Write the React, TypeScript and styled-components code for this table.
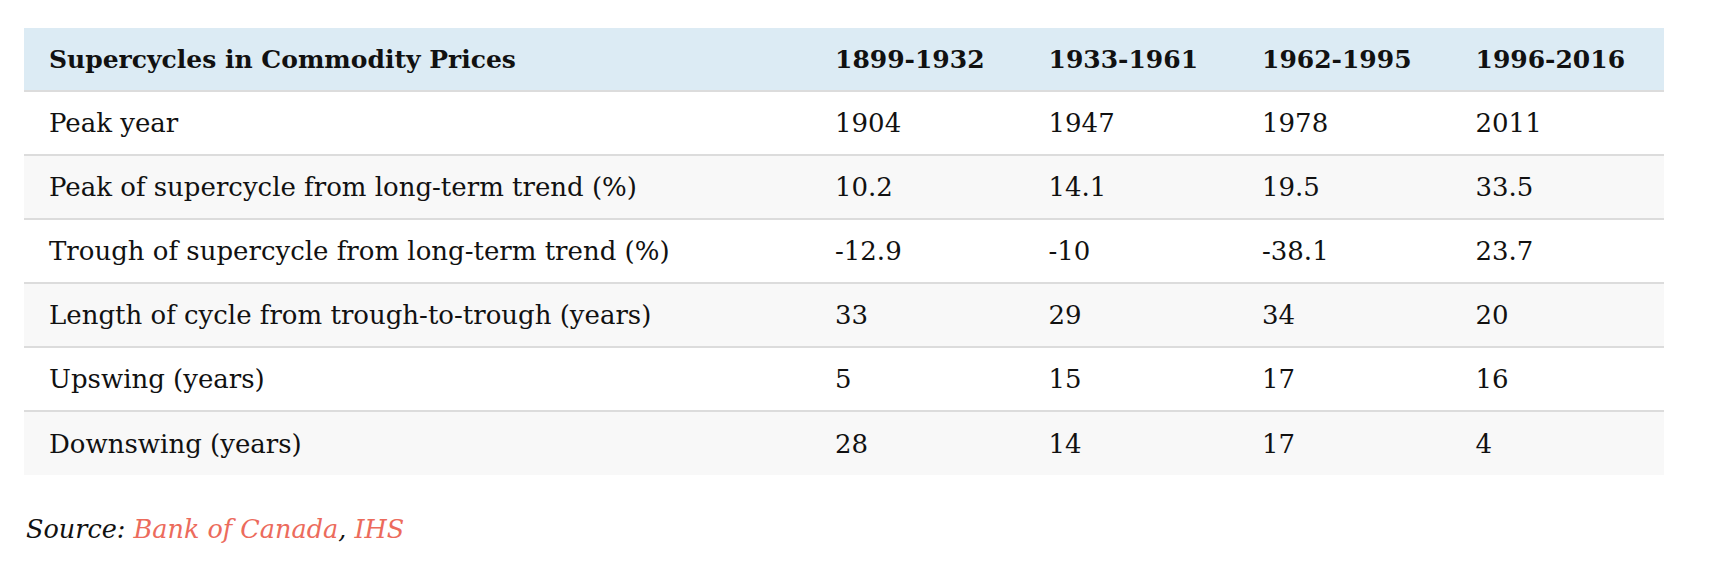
import React from "react";
import { styled, createGlobalStyle } from "styled-components";

const GlobalStyle = createGlobalStyle`
  html, body {
    margin: 0;
    padding: 0;
    background: #ffffff;
  }
  body {
    font-family: "DejaVu Serif", "Liberation Serif", serif;
    color: #111111;
  }
`;

type CycleRow = {
  label: string;
  values: string[];
};

const periods = ["1899-1932", "1933-1961", "1962-1995", "1996-2016"];

const rows: CycleRow[] = [
  { label: "Peak year", values: ["1904", "1947", "1978", "2011"] },
  {
    label: "Peak of supercycle from long-term trend (%)",
    values: ["10.2", "14.1", "19.5", "33.5"],
  },
  {
    label: "Trough of supercycle from long-term trend (%)",
    values: ["-12.9", "-10", "-38.1", "23.7"],
  },
  {
    label: "Length of cycle from trough-to-trough (years)",
    values: ["33", "29", "34", "20"],
  },
  { label: "Upswing (years)", values: ["5", "15", "17", "16"] },
  { label: "Downswing (years)", values: ["28", "14", "17", "4"] },
];

const App = () => {
  return (
    <Page>
      <GlobalStyle />
      <DataTable>
        <colgroup>
          <LabelCol />
          {periods.map((p) => (
            <col key={p} />
          ))}
        </colgroup>
        <thead>
          <HeadRow>
            <HeadCell>Supercycles in Commodity Prices</HeadCell>
            {periods.map((p) => (
              <HeadCell key={p}>{p}</HeadCell>
            ))}
          </HeadRow>
        </thead>
        <tbody>
          {rows.map((row, i) => (
            <Row key={row.label} $shaded={i % 2 === 1}>
              <Cell>{row.label}</Cell>
              {row.values.map((v, j) => (
                <Cell key={j}>{v}</Cell>
              ))}
            </Row>
          ))}
        </tbody>
      </DataTable>
      <Source>
        Source: <SourceLink href="#">Bank of Canada</SourceLink>,{" "}
        <SourceLink href="#">IHS</SourceLink>
      </Source>
    </Page>
  );
};

export default App;

const Page = styled.div`
  padding: 28px 50px 20px 24px;
  width: 1640px;
`;

const DataTable = styled.table`
  width: 1640px;
  border-collapse: collapse;
  table-layout: fixed;
  font-size: 26px;
`;

const LabelCol = styled.col`
  width: 786px;
`;

const HeadRow = styled.tr`
  background: #dcebf4;
  border-bottom: 2px solid #dcdcdc;
`;

const HeadCell = styled.th`
  height: 63px;
  padding: 0 25px;
  text-align: left;
  font-weight: 700;
  font-size: 25px;
  vertical-align: middle;
  box-sizing: border-box;
  white-space: nowrap;
`;

const Row = styled.tr<{ $shaded: boolean }>`
  background: ${(p) => (p.$shaded ? "#f8f8f8" : "#ffffff")};
  border-bottom: 2px solid #dcdcdc;

  &:last-child {
    border-bottom: none;
  }
`;

const Cell = styled.td`
  height: 64px;
  padding: 0 25px;
  vertical-align: middle;
  box-sizing: border-box;
  white-space: nowrap;
`;

const Source = styled.p`
  margin: 35px 0 0 2px;
  font-size: 25.5px;
  line-height: 38px;
  font-style: italic;
  color: #111111;
`;

const SourceLink = styled.a`
  color: #ec6b5c;
  text-decoration: none;
`;
